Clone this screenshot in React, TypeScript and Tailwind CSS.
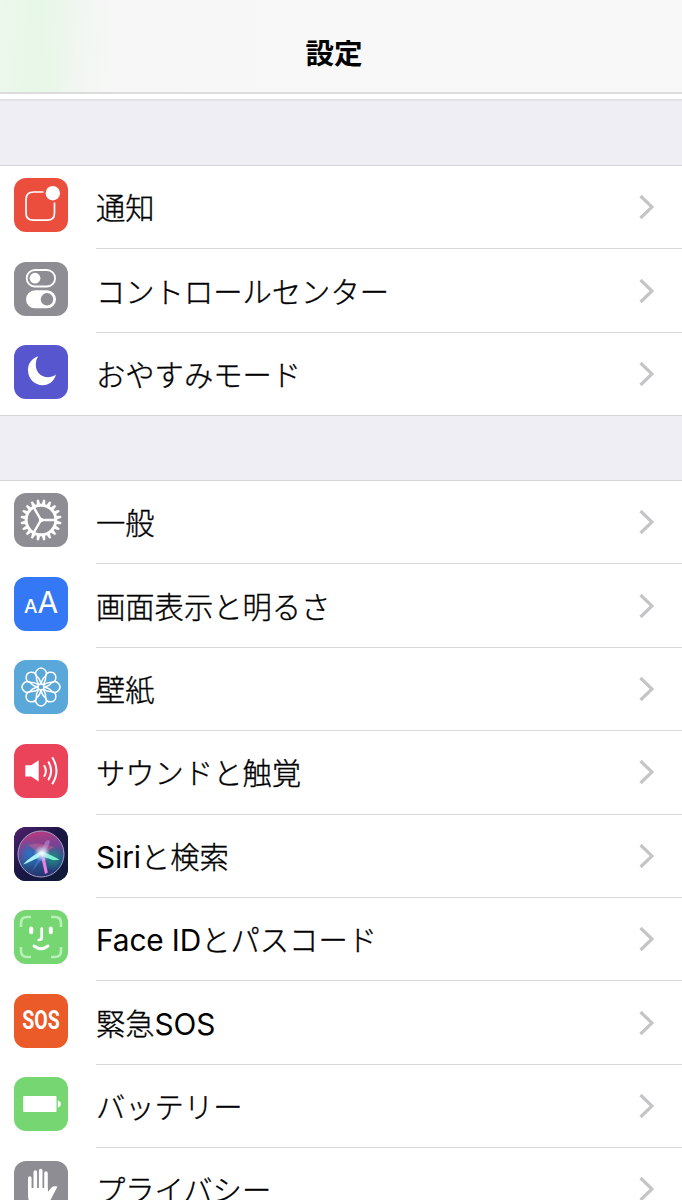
import type { ReactNode } from "react";

interface Item {
  label: ReactNode;
  bg: string;
  icon: ReactNode;
}

interface RowProps {
  item: Item;
  last?: boolean;
}

const teeth = Array.from({ length: 20 }, (_, i) => i * 18);
const petals = Array.from({ length: 8 }, (_, i) => i * 45);

function NotificationsIcon() {
  return (
    <svg viewBox="0 0 54 54" className="w-full h-full" fill="none">
      <path d="M29.500 14H19.500Q12 14 12 21.500V35Q12 42.200 19.500 42.200H33Q40.500 42.200 40.500 35V24.500" stroke="#fff" strokeWidth="1.700" />
      <circle cx="38.800" cy="15.200" r="7.200" fill="#fff" />
    </svg>
  );
}

function ControlCenterIcon() {
  return (
    <svg viewBox="0 0 54 54" className="w-full h-full" fill="none">
      <rect x="12.700" y="8" width="28.400" height="16.500" rx="8.250" stroke="#fff" strokeWidth="1.800" />
      <circle cx="21" cy="16.200" r="5.400" fill="#fff" />
      <rect x="12" y="28.300" width="30" height="18" rx="9" fill="#fff" />
      <circle cx="33" cy="37.300" r="6.200" fill="#8e8d94" />
    </svg>
  );
}

function MoonIcon() {
  return (
    <svg viewBox="0 0 54 54" className="w-full h-full">
      <path d="M24.200 11.300C17.500 13.500 14 18.800 14 25.200C14 33.800 20.600 40.200 28.800 40.200C35 40.200 40 36.500 42 29.600C39.500 31.600 36.800 32.300 34 32.300C27 32.300 21.800 27 21.800 20C21.800 16.800 22.500 13.800 24.200 11.300Z" fill="#fff" />
    </svg>
  );
}

function GearIcon() {
  return (
    <svg viewBox="0 0 54 54" className="w-full h-full" fill="none" stroke="#fff">
      <circle cx="27" cy="27" r="14.800" strokeWidth="2.900" />
      {teeth.map((a) => (
        <path key={a} d="M25.200 12L26.100 6.700H27.900L28.800 12Z" fill="#fff" strokeWidth="0.300" transform={`rotate(${a + 9} 27 27)`} />
      ))}
      <path d="M27 27H42M27 27L19.500 14M27 27L19.500 40" strokeWidth="2.500" />
      <circle cx="27" cy="27" r="2.200" fill="#fff" stroke="none" />
    </svg>
  );
}

function DisplayIcon() {
  return (
    <span className="flex h-full items-baseline justify-center pt-[5.5px] text-white font-['Inter']">
      <span className="text-[19px] leading-[40px] font-medium">A</span>
      <span className="text-[30px] leading-[40px] font-normal">A</span>
    </span>
  );
}

function WallpaperIcon() {
  return (
    <svg viewBox="0 0 54 54" className="w-full h-full" fill="none" stroke="#fff" strokeWidth="1.500">
      {petals.map((a) => (
        <g key={a} transform={`rotate(${a} 27 27)`}>
          <path d="M22.500 16.300A5.300 5.300 0 1 1 31.500 16.300" />
          <path d="M25.900 24.200Q24.800 18.500 27 15.500Q29.200 18.500 28.100 24.200" transform="rotate(22.500 27 27)" />
        </g>
      ))}
      <circle cx="27" cy="27" r="3" />
    </svg>
  );
}

function SoundIcon() {
  return (
    <svg viewBox="0 0 54 54" className="w-full h-full" fill="none">
      <path d="M11.300 21.200H17.200L24.700 16.300V37.500L17.200 32.500H11.300Z" fill="#fff" />
      <path d="M30 21.200Q33.800 26.800 30 32.700M34.200 17.500Q40.200 26.800 34.200 36.300M38.200 13.300Q46.800 26.800 38.200 40.200" stroke="#fff" strokeWidth="2" />
    </svg>
  );
}

function SiriIcon() {
  return (
    <svg viewBox="0 0 54 54" className="w-full h-full" fill="none">
      <defs>
        <linearGradient id="siriBg" x1="0" y1="0" x2="1" y2="1">
          <stop offset="0" stopColor="#51216c" />
          <stop offset="0.45" stopColor="#1b1646" />
          <stop offset="1" stopColor="#0c1b34" />
        </linearGradient>
        <linearGradient id="siriOrb" x1="0.400" y1="0" x2="0.600" y2="1">
          <stop offset="0" stopColor="#b83a7e" />
          <stop offset="0.4" stopColor="#704396" />
          <stop offset="0.65" stopColor="#27568c" />
          <stop offset="1" stopColor="#25306d" />
        </linearGradient>
        <radialGradient id="siriBlue">
          <stop offset="0" stopColor="#2476c2" />
          <stop offset="1" stopColor="#2476c2" stopOpacity="0" />
        </radialGradient>
        <radialGradient id="siriTeal">
          <stop offset="0" stopColor="#218a81" />
          <stop offset="1" stopColor="#218a81" stopOpacity="0" />
        </radialGradient>
        <radialGradient id="siriGlow">
          <stop offset="0" stopColor="#fff" />
          <stop offset="0.4" stopColor="#d9f5ff" stopOpacity="0.7" />
          <stop offset="1" stopColor="#a7ddff" stopOpacity="0" />
        </radialGradient>
      </defs>
      <rect width="54" height="54" fill="url(#siriBg)" />
      <circle cx="27" cy="27" r="23" fill="url(#siriOrb)" />
      <ellipse cx="16" cy="27" rx="12" ry="14" fill="url(#siriBlue)" />
      <ellipse cx="39" cy="31" rx="11" ry="13" fill="url(#siriTeal)" />
      <path d="M14 18Q22 14 40 20L28 28Z" fill="#ef668f" opacity="0.400" />
      <path d="M27 26L31 15Q35 11 36 15Q34 20 30 28Z" fill="#c7a5e1" opacity="0.450" />
      <path d="M28 24Q18 28 9 37.500L12 36.500L28 29Z" fill="#a8f4ff" />
      <path d="M27 24Q38 28 45.500 33L39 33L27 29Z" fill="#80efd2" />
      <path d="M26.500 27L31 47L33.800 45.500L30 27Z" fill="#eb7de5" />
      <path d="M26 28L18 44L30 30Z" fill="#4975dc" opacity="0.700" />
      <circle cx="28" cy="26.500" r="8.500" fill="url(#siriGlow)" />
      <circle cx="27" cy="27" r="23" stroke="#aaa0c6" strokeWidth="1" />
    </svg>
  );
}

function FaceIdIcon() {
  return (
    <svg viewBox="0 0 54 54" className="w-full h-full" fill="none" strokeLinecap="round">
      <path d="M7 17V13Q7 7 13 7H17M37 7H41Q47 7 47 13V17M47 37V41Q47 47 41 47H37M17 47H13Q7 47 7 41V37" stroke="#b9f0b8" strokeWidth="2.600" strokeLinecap="butt" />
      <path d="M17.200 18.600V22.200M36.800 18.600V22.200" stroke="#fff" strokeWidth="4" />
      <path d="M27.700 18.500V27.500Q27.700 30 24.800 30" stroke="#fff" strokeWidth="2.700" />
      <path d="M20 36Q27 41.500 34 36" stroke="#fff" strokeWidth="2.900" />
    </svg>
  );
}

function SosIcon() {
  return (
    <span className="flex h-full items-center justify-center pt-px text-[25px] leading-[30px] font-bold text-white font-['Roboto']">
      <span className="scale-x-[0.78]">SOS</span>
    </span>
  );
}

function BatteryIcon() {
  return (
    <svg viewBox="0 0 54 54" className="w-full h-full" fill="#fff">
      <rect x="9.200" y="19" width="33.300" height="16" rx="0.800" />
      <path d="M43.800 23.500Q46.800 24.200 46.800 27T43.800 30.500Z" />
    </svg>
  );
}

function HandIcon() {
  return (
    <svg viewBox="0 0 54 54" className="w-full h-full" fill="none" stroke="#fff" strokeLinecap="round">
      <path d="M15.800 17V34M21.300 11V31M26.700 9.500V31M32 12V33" strokeWidth="3.600" />
      <path d="M14 27H33.800V31L37.500 26.500Q39.500 24.500 43.500 25.500L36 40Q33 46 26 46Q14 46 14 34Z" fill="#fff" stroke="none" />
    </svg>
  );
}

function Latin({ children }: { children: ReactNode }) {
  return <span className="font-['Inter'] text-[29.8px] leading-0 font-normal tracking-[-0.1px] [-webkit-text-stroke:0px]">{children}</span>;
}

const alerts: Item[] = [
  { label: "通知", bg: "bg-[#eb4e3d]", icon: <NotificationsIcon /> },
  { label: "コントロールセンター", bg: "bg-[#8e8d94]", icon: <ControlCenterIcon /> },
  { label: "おやすみモード", bg: "bg-[#5856ce]", icon: <MoonIcon /> },
];

const general: Item[] = [
  { label: "一般", bg: "bg-[#8e8d94]", icon: <GearIcon /> },
  { label: "画面表示と明るさ", bg: "bg-[#3478f6]", icon: <DisplayIcon /> },
  { label: "壁紙", bg: "bg-[#59a8d9]", icon: <WallpaperIcon /> },
  { label: "サウンドと触覚", bg: "bg-[#eb445a]", icon: <SoundIcon /> },
  { label: <><Latin>Siri</Latin>と検索</>, bg: "bg-[#1b1646]", icon: <SiriIcon /> },
  { label: <><Latin>Face ID</Latin>とパスコード</>, bg: "bg-[#75d672]", icon: <FaceIdIcon /> },
  { label: <>緊急<Latin>SOS</Latin></>, bg: "bg-[#eb5a29]", icon: <SosIcon /> },
  { label: "バッテリー", bg: "bg-[#75d672]", icon: <BatteryIcon /> },
  { label: "プライバシー", bg: "bg-[#8e8d94]", icon: <HandIcon /> },
];

function Row({ item, last }: RowProps) {
  return (
    <li className="flex h-[83.4px] shrink-0 pl-3.5">
      <div className={`mt-[12.4px] mr-7 size-[54px] shrink-0 overflow-hidden rounded-[12px] ${item.bg}`}>{item.icon}</div>
      <div className={`flex flex-1 items-center justify-between pr-7 ${last ? "" : "border-b border-[#d9d9dc]"}`}>
        <span className="pb-0.5 text-[29.3px] leading-[40px] font-light whitespace-nowrap [-webkit-text-stroke:0.35px_black]">{item.label}</span>
        <svg viewBox="0 0 16 26" className="h-[26px] w-4" fill="none">
          <path d="M2.500 2L14 13L2.500 24" stroke="#c5c5c9" strokeWidth="3.200" />
        </svg>
      </div>
    </li>
  );
}

export default function App() {
  return (
    <div className="flex h-[1200px] w-full flex-col overflow-hidden bg-white text-black font-['Noto_Sans_CJK_JP',sans-serif]">
      <header className="flex h-[94px] shrink-0 justify-center border-b-2 border-[#dcdcdc] bg-[linear-gradient(94deg,#edf7ed_0px,#e7f8e7_35px,#e9f7e9_55px,#f2f6f2_85px,#f7f7f7_120px,#f8f8f9_100%)] pt-[31px] pr-3.5">
        <h1 className="text-[28.5px] leading-[42px] font-bold">設定</h1>
      </header>
      <div className="mt-[5px] h-[66px] shrink-0 border-t-2 border-[#e2e2e4] bg-[#efeef5]" />
      <ul className="shrink-0 border-t border-[#d5d5d9]">
        {alerts.map((item, i) => (
          <Row key={i} item={item} last={i === alerts.length - 1} />
        ))}
      </ul>
      <div className="-mt-[1.2px] h-[65px] shrink-0 border-t border-[#d5d5d9] bg-[#efeef5]" />
      <ul className="shrink-0 border-t border-[#d5d5d9]">
        {general.map((item, i) => (
          <Row key={i} item={item} />
        ))}
      </ul>
    </div>
  );
}
